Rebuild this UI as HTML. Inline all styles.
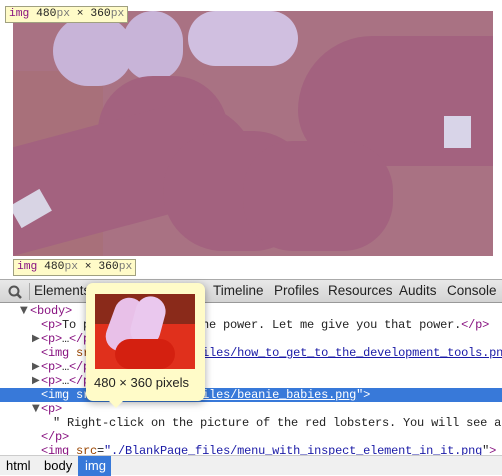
<!DOCTYPE html>
<html><head><style>
*{margin:0;padding:0;box-sizing:border-box}
body{width:502px;height:475px;position:relative;overflow:hidden;background:#fff;font-family:"Liberation Sans",sans-serif}
.mono{font-family:"Liberation Mono","DejaVu Sans Mono",monospace}
.img{position:absolute;left:13px;top:11px;width:480px;height:245px;background:#a97283;overflow:hidden}
.lbl{position:absolute;background:#fffbc8;border:1px solid #a0a080;font-size:11.3px;height:17px;line-height:15px;padding:0 3px;color:#222}
.lbl b{font-weight:normal;color:#881280}
.lbl i{font-style:normal;color:#777}
.tb{position:absolute;left:0;top:279px;width:502px;height:24px;background:linear-gradient(#e8e8e8,#d4d4d4);border-top:1px solid #aaa;border-bottom:1px solid #999;font-size:13.5px}
.tb span{position:absolute;top:3px;color:#222}
.row{position:absolute;left:0;width:502px;height:14px;font-size:12px;line-height:14px;white-space:pre;color:#222;letter-spacing:-0.2px}
.row span.x{position:absolute;top:0}
.ar{position:absolute;top:0;font-size:10px;color:#555;font-family:"DejaVu Sans",sans-serif}
.t{color:#881280}.a{color:#994500}.v{color:#1a1aa6;text-decoration:underline}
.sel{background:#3879d9;color:#fff}
.sel .t,.sel .a,.sel .v{color:#fff}
.bot{position:absolute;left:0;top:455px;width:502px;height:20px;background:#f0f0f0;border-top:1px solid #ccc;font-size:13px}
.bot span{position:absolute;top:2px}
.tip{position:absolute;left:86px;top:283px;width:119px;height:118px;background:#fffbc8;border-radius:7px;box-shadow:0 2px 8px rgba(0,0,0,.35)}
.tri{position:absolute;left:108px;top:400px;width:0;height:0;border-left:8px solid transparent;border-right:8px solid transparent;border-top:8px solid #fffbc8}
</style></head><body>
<div class="img">
 <div style="position:absolute;left:0;top:60px;width:90px;height:185px;background:#a8707a"></div>
 <div style="position:absolute;left:40px;top:5px;width:80px;height:70px;background:#c8b4d8;border-radius:40px"></div>
 <div style="position:absolute;left:110px;top:0;width:60px;height:70px;background:#c8b4d8;border-radius:30px"></div>
 <div style="position:absolute;left:175px;top:0;width:110px;height:55px;background:#d0bfe0;border-radius:30px"></div>
 <div style="position:absolute;left:85px;top:65px;width:130px;height:110px;background:#a3627f;border-radius:60px"></div>
 <div style="position:absolute;left:0;top:140px;width:260px;height:105px;background:#a3627f;border-radius:20px 70px 0 0;transform:rotate(-15deg);transform-origin:0 100%"></div>
 <div style="position:absolute;left:150px;top:120px;width:150px;height:120px;background:#a3627f;border-radius:60px"></div>
 <div style="position:absolute;left:285px;top:25px;width:195px;height:130px;background:#a3627f;border-radius:80px 0 0 60px"></div>
 <div style="position:absolute;left:230px;top:130px;width:150px;height:110px;background:#a3627f;border-radius:50px"></div>
 <div style="position:absolute;left:431px;top:105px;width:27px;height:32px;background:#d8d4e8"></div>
 <div style="position:absolute;left:0;top:185px;width:35px;height:25px;background:#d8d4e4;transform:rotate(-30deg)"></div>
</div>
<div class="lbl mono" style="left:5px;top:6px"><b>img</b> 480<i>px</i> × 360<i>px</i></div>
<div class="lbl mono" style="left:13px;top:259px"><b>img</b> 480<i>px</i> × 360<i>px</i></div>
<div class="tb">
 <svg style="position:absolute;left:8px;top:5px" width="14" height="14"><circle cx="6" cy="6" r="4.5" fill="none" stroke="#555" stroke-width="2"/><line x1="9.5" y1="9.5" x2="13" y2="13" stroke="#555" stroke-width="2.5"/></svg>
 <div style="position:absolute;left:29px;top:3px;width:1px;height:17px;background:#aaa"></div>
 <span style="left:34px">Elements</span>
 <span style="left:213px">Timeline</span>
 <span style="left:274px">Profiles</span>
 <span style="left:328px">Resources</span>
 <span style="left:399px">Audits</span>
 <span style="left:447px">Console</span>
</div>
<div class="row mono" style="top:304px"><span class="ar" style="left:20px">▼</span><span class="x t" style="left:30px">&lt;body&gt;</span></div>
<div class="row mono" style="top:318px"><span class="x" style="left:41px"><span class="t">&lt;p&gt;</span>To people who want the power. Let me give you that power.<span class="t">&lt;/p&gt;</span></span></div>
<div class="row mono" style="top:332px"><span class="ar" style="left:32px">▶</span><span class="x" style="left:41px"><span class="t">&lt;p&gt;</span>…<span class="t">&lt;/p&gt;</span></span></div>
<div class="row mono" style="top:346px"><span class="x" style="left:41px"><span class="t">&lt;img </span><span class="a">src</span>=<span class="v">"./BlankPage_files/how_to_get_to_the_development_tools.png</span></span></div>
<div class="row mono" style="top:360px"><span class="ar" style="left:32px">▶</span><span class="x" style="left:41px"><span class="t">&lt;p&gt;</span>…<span class="t">&lt;/p&gt;</span></span></div>
<div class="row mono" style="top:374px"><span class="ar" style="left:32px">▶</span><span class="x" style="left:41px"><span class="t">&lt;p&gt;</span>…<span class="t">&lt;/p&gt;</span></span></div>
<div class="row mono sel" style="top:388px"><span class="x" style="left:41px"><span class="t">&lt;img </span><span class="a">src</span>=<span class="v">"./BlankPage_files/beanie_babies.png</span>"<span class="t">&gt;</span></span></div>
<div class="row mono" style="top:402px"><span class="ar" style="left:32px">▼</span><span class="x t" style="left:41px">&lt;p&gt;</span></div>
<div class="row mono" style="top:416px"><span class="x" style="left:53px">" Right-click on the picture of the red lobsters. You will see a</span></div>
<div class="row mono" style="top:430px"><span class="x t" style="left:41px">&lt;/p&gt;</span></div>
<div class="row mono" style="top:444px"><span class="x" style="left:41px"><span class="t">&lt;img </span><span class="a">src</span>=<span class="v">"./BlankPage_files/menu_with_inspect_element_in_it.png</span>"<span class="t">&gt;</span></span></div>
<div class="bot">
 <span style="left:6px">html</span><span style="left:44px">body</span>
 <div style="position:absolute;left:78px;top:0;width:33px;height:20px;background:#3879d9"></div>
 <span style="left:85px;color:#fff">img</span>
</div>
<div class="tip">
 <div style="position:absolute;left:9px;top:11px;width:100px;height:75px;background:#e0301c;overflow:hidden">
  <div style="position:absolute;left:0;top:0;width:100px;height:30px;background:#8a2a1a"></div>
  <div style="position:absolute;left:15px;top:3px;width:30px;height:55px;background:#e8c0e8;border-radius:15px;transform:rotate(20deg)"></div>
  <div style="position:absolute;left:38px;top:2px;width:30px;height:50px;background:#eac8ee;border-radius:15px;transform:rotate(15deg)"></div>
  <div style="position:absolute;left:20px;top:45px;width:60px;height:30px;background:#d42010;border-radius:20px"></div>
 </div>
 <div style="position:absolute;left:8px;top:92px;font-size:13px;color:#222">480 × 360 pixels</div>
</div>
<div class="tri"></div>
</body></html>
